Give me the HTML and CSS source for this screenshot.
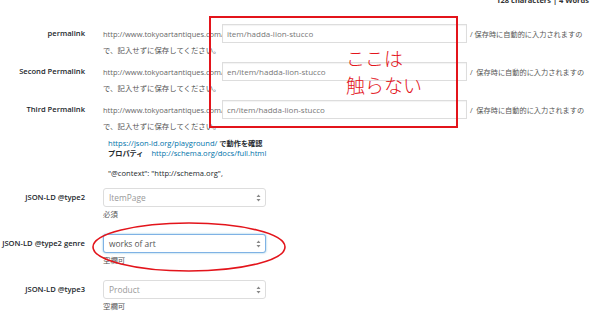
FILE: index.html
```html
<!DOCTYPE html>
<html lang="ja">
<head>
    <meta charset="UTF-8">
    <meta name="viewport" content="width=device-width, initial-scale=1.0">
    <title>Permalink settings</title>
    <link rel="stylesheet" href="styles.css">
</head>
<body>
    <div class="word-count">128 characters | 4 Words</div>

    <div class="form-table">
        <!-- Permalinks -->
        <div class="row permalink-row">
            <div class="label">permalink</div>
            <div class="field">
                <div class="permalink-line">
                    <span class="base-url">http://www.tokyoartantiques.com/</span>
                    <input class="text-input" type="text" value="item/hadda-lion-stucco">
                    <span class="suffix">/ 保存時に自動的に入力されますの</span>
                </div>
                <div class="note">で、記入せずに保存してください。</div>
            </div>
        </div>

        <div class="row permalink-row">
            <div class="label">Second Permalink</div>
            <div class="field">
                <div class="permalink-line">
                    <span class="base-url">http://www.tokyoartantiques.com/</span>
                    <input class="text-input" type="text" value="en/item/hadda-lion-stucco">
                    <span class="suffix">/ &nbsp;保存時に自動的に入力されますの</span>
                </div>
                <div class="note">で、記入せずに保存してください。</div>
            </div>
        </div>

        <div class="row permalink-row">
            <div class="label">Third Permalink</div>
            <div class="field">
                <div class="permalink-line">
                    <span class="base-url">http://www.tokyoartantiques.com/</span>
                    <input class="text-input" type="text" value="cn/item/hadda-lion-stucco">
                    <span class="suffix">/ &nbsp;保存時に自動的に入力されますの</span>
                </div>
                <div class="note">で、記入せずに保存してください。</div>
            </div>
        </div>

        <!-- JSON-LD info -->
        <div class="row info-row">
            <div class="label"></div>
            <div class="field info">
                <div class="info-line"><a href="#">https://json-ld.org/playground/</a> <b>で動作を確認</b></div>
                <div class="info-line"><b>プロパティ</b> &nbsp;&nbsp; <a href="#">http://schema.org/docs/full.html</a></div>
                <div class="context">"@context": "http://schema.org",</div>
            </div>
        </div>

        <!-- JSON-LD selects -->
        <div class="row select-row">
            <div class="label">JSON-LD @type2</div>
            <div class="field">
                <div class="select">
                    <span class="select-value">ItemPage</span>
                    <svg class="select-arrow" width="5" height="8" viewBox="0 0 5 8"><path d="M2.5 0.5 L4.5 3 L0.5 3 Z M2.5 7.5 L4.5 5 L0.5 5 Z" fill="#888"/></svg>
                </div>
                <div class="note">必須</div>
            </div>
        </div>

        <div class="row select-row">
            <div class="label">JSON-LD @type2 genre</div>
            <div class="field">
                <div class="select focused">
                    <span class="select-value">works of art</span>
                    <svg class="select-arrow" width="5" height="8" viewBox="0 0 5 8"><path d="M2.5 0.5 L4.5 3 L0.5 3 Z M2.5 7.5 L4.5 5 L0.5 5 Z" fill="#888"/></svg>
                </div>
                <div class="note">空欄可</div>
            </div>
        </div>

        <div class="row select-row">
            <div class="label">JSON-LD @type3</div>
            <div class="field">
                <div class="select">
                    <span class="select-value">Product</span>
                    <svg class="select-arrow" width="5" height="8" viewBox="0 0 5 8"><path d="M2.5 0.5 L4.5 3 L0.5 3 Z M2.5 7.5 L4.5 5 L0.5 5 Z" fill="#888"/></svg>
                </div>
                <div class="note">空欄可</div>
            </div>
        </div>
    </div>

    <!-- Annotations drawn over the screenshot -->
    <div class="annotation-box"></div>
    <div class="annotation-text">ここは<br>触らない</div>
    <svg class="annotation-ellipse" width="200" height="54" viewBox="0 0 200 54">
        <ellipse cx="97" cy="25" rx="96" ry="24" fill="none" stroke="#e3141b" stroke-width="1.6"/>
    </svg>
</body>
</html>
```

FILE: styles.css
```css
/* Base styles */
* {
    margin: 0;
    padding: 0;
    box-sizing: border-box;
}

body {
    position: relative;
    width: 600px;
    height: 324px;
    overflow: hidden;
    background: #fff;
    font-family: 'Open Sans', 'Noto Sans CJK JP', sans-serif;
    font-size: 8px;
    color: #444;
}

.word-count {
    height: 4px;
    line-height: 0;
    padding-right: 11px;
    text-align: right;
    font-weight: bold;
    font-size: 7.5px;
    color: #333;
}

/* Form table */
.form-table {
    padding-top: 20px;
}

.row {
    display: grid;
    grid-template-columns: 85px 1fr;
    column-gap: 18px;
}

.label {
    text-align: right;
    font-weight: 600;
    font-size: 7.6px;
    color: #23282d;
    height: 19px;
    line-height: 19px;
    white-space: nowrap;
}

.note {
    height: 14px;
    line-height: 14px;
    font-size: 7.4px;
    color: #555;
}

/* Permalink rows */
.permalink-row {
    padding-bottom: 5px;
}

.permalink-line {
    display: flex;
    align-items: center;
    height: 19px;
    white-space: nowrap;
}

.base-url {
    width: 119px;
    flex: none;
    font-size: 7.5px;
    color: #666;
}

.text-input {
    width: 245px;
    height: 19px;
    flex: none;
    border: 1px solid #ddd;
    box-shadow: inset 0 1px 1px rgba(0,0,0,0.05);
    padding: 0 4px;
    font-family: 'Open Sans', sans-serif;
    font-size: 8px;
    color: #777;
    background: #fff;
}

.suffix {
    margin-left: 3px;
    font-size: 7.2px;
    color: #555;
}

/* Info block */
.info {
    padding-left: 5px;
    padding-bottom: 10px;
    font-size: 7.6px;
}

.info-line {
    height: 10px;
    line-height: 10px;
    white-space: nowrap;
    color: #23282d;
}

.info-line b {
    font-weight: 700;
    font-size: 7.2px;
}

.info a {
    color: #0073aa;
    text-decoration: none;
}

.context {
    margin-top: 10px;
    height: 10px;
    line-height: 10px;
    color: #23282d;
}

/* Selects */
.select-row {
    padding-bottom: 13px;
}

.select {
    position: relative;
    width: 163px;
    height: 19px;
    border: 1px solid #ddd;
    border-radius: 3px;
    background: #fff;
    display: flex;
    align-items: center;
    padding-left: 5px;
    font-size: 8.4px;
    color: #999;
}

.select.focused {
    border-color: #7fb2e5;
    box-shadow: 0 0 2px rgba(30,140,190,0.6);
    color: #555;
}

.select-arrow {
    position: absolute;
    right: 4px;
    top: 5px;
}

/* Red annotations */
.annotation-box {
    position: absolute;
    left: 209px;
    top: 16px;
    width: 249px;
    height: 112px;
    border: 2px solid #e3141b;
}

.annotation-text {
    position: absolute;
    left: 346px;
    top: 44px;
    font-family: 'Noto Sans CJK JP', sans-serif;
    font-weight: 300;
    font-size: 19px;
    line-height: 27px;
    color: #e3141b;
}

.annotation-ellipse {
    position: absolute;
    left: 92px;
    top: 222px;
}
```
